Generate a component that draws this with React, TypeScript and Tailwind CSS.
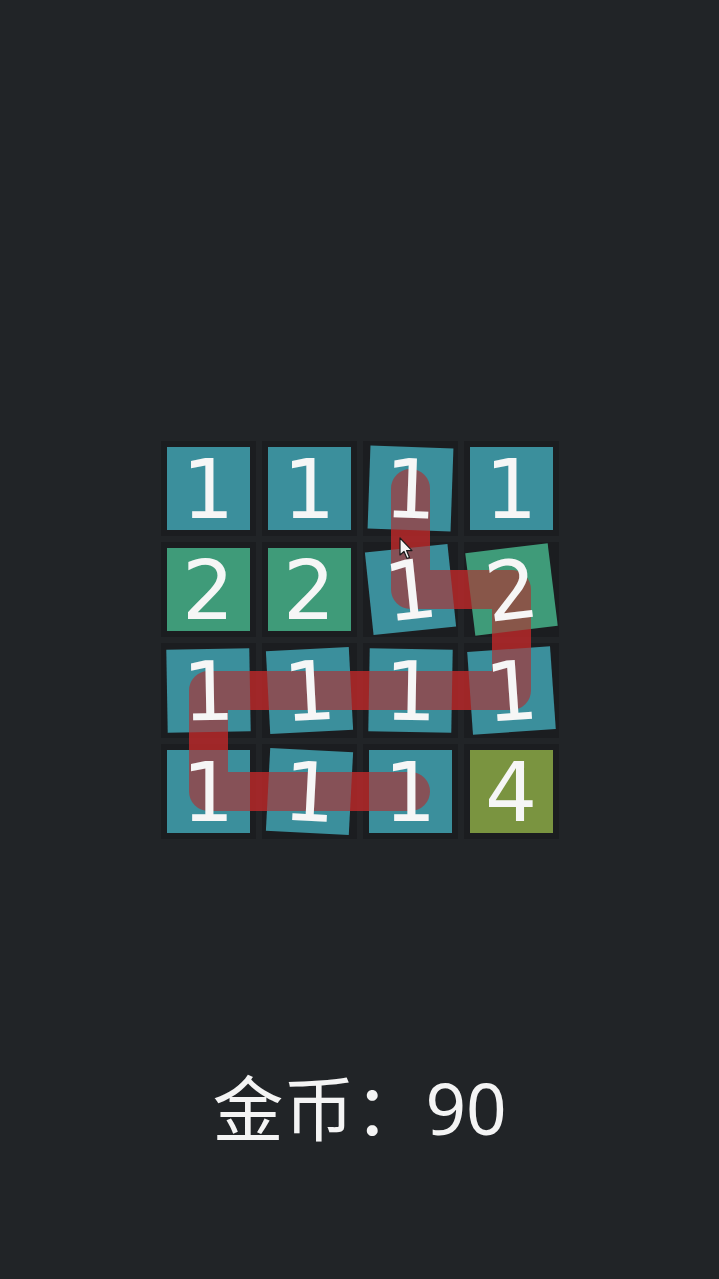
type Tile = { n: number; color: string; rot: string };

const teal = "bg-[#3b8f9c]";
const green = "bg-[#3f9b79]";
const olive = "bg-[#7a9440]";

const tiles: Tile[] = [
  { n: 1, color: teal, rot: "" },
  { n: 1, color: teal, rot: "" },
  { n: 1, color: teal, rot: "rotate-[2deg]" },
  { n: 1, color: teal, rot: "" },
  { n: 2, color: green, rot: "" },
  { n: 2, color: green, rot: "" },
  { n: 1, color: teal, rot: "-rotate-[6deg]" },
  { n: 2, color: green, rot: "-rotate-[7deg]" },
  { n: 1, color: teal, rot: "-rotate-[1deg]" },
  { n: 1, color: teal, rot: "-rotate-[3deg]" },
  { n: 1, color: teal, rot: "rotate-[1deg]" },
  { n: 1, color: teal, rot: "-rotate-[4deg]" },
  { n: 1, color: teal, rot: "" },
  { n: 1, color: teal, rot: "rotate-[3deg]" },
  { n: 1, color: teal, rot: "" },
  { n: 4, color: olive, rot: "" },
];

// centres of the selected cells, in grid coordinates
const trail = "M 249.5 47.5 L 249.5 148.5 L 350.5 148.5 L 350.5 249.5 L 47.5 249.5 L 47.5 350.5 L 249.5 350.5";

function Trail({ className }: { className: string }) {
  return (
    <svg className={className} viewBox="0 0 398 398" width={398} height={398} aria-hidden>
      <path
        d={trail}
        fill="none"
        stroke="rgb(185,40,42)"
        strokeOpacity={0.6}
        strokeWidth={39}
        strokeLinecap="round"
        strokeLinejoin="round"
      />
    </svg>
  );
}

function Cursor() {
  return (
    <svg
      className="pointer-events-none absolute left-[238px] top-[96px] z-40"
      width={15}
      height={24}
      viewBox="0 0 15 24"
      aria-hidden
    >
      <path
        d="M1 1 L1 18 L5 14.5 L8 21.5 L10.5 20.5 L7.6 13.6 L13 13.6 Z"
        fill="#f4f4f4"
        stroke="#1b1b1b"
        strokeWidth={1.2}
        strokeLinejoin="round"
      />
    </svg>
  );
}

const gridCls = "grid grid-cols-[repeat(4,95px)] grid-rows-[repeat(4,95px)] gap-[6px]";

export default function App() {
  return (
    <main className="flex min-h-[1279px] w-full flex-col items-center bg-[#212427] pt-[441px]">
      <div className="relative h-[398px] w-[398px]">
        <div className={gridCls}>
          {tiles.map((tile, i) => (
            <div key={i} className="flex items-center justify-center bg-[#1b1d20]">
              <div className={`relative z-10 h-[83px] w-[83px] ${tile.color} ${tile.rot}`} />
            </div>
          ))}
        </div>
        <Trail className="absolute inset-0 z-[5]" />
        <Trail className="pointer-events-none absolute inset-0 z-20" />
        {/* numbers sit above the trail */}
        <div className={`pointer-events-none absolute inset-0 z-30 ${gridCls}`}>
          {tiles.map((tile, i) => (
            <div key={i} className="flex items-center justify-center">
              <div className={`flex h-[83px] w-[83px] items-center justify-center ${tile.rot}`}>
                <span className="pt-[2px] font-['DejaVu_Sans',sans-serif] text-[82px] leading-none text-[#f6f6f6]">
                  {tile.n}
                </span>
              </div>
            </div>
          ))}
        </div>
        <Cursor />
      </div>

      <p className="mt-[233px] font-['Noto_Sans','Noto_Sans_CJK_SC',sans-serif] text-[71px] leading-none text-[#f4f4f4]">
        金币：90
      </p>
    </main>
  );
}
